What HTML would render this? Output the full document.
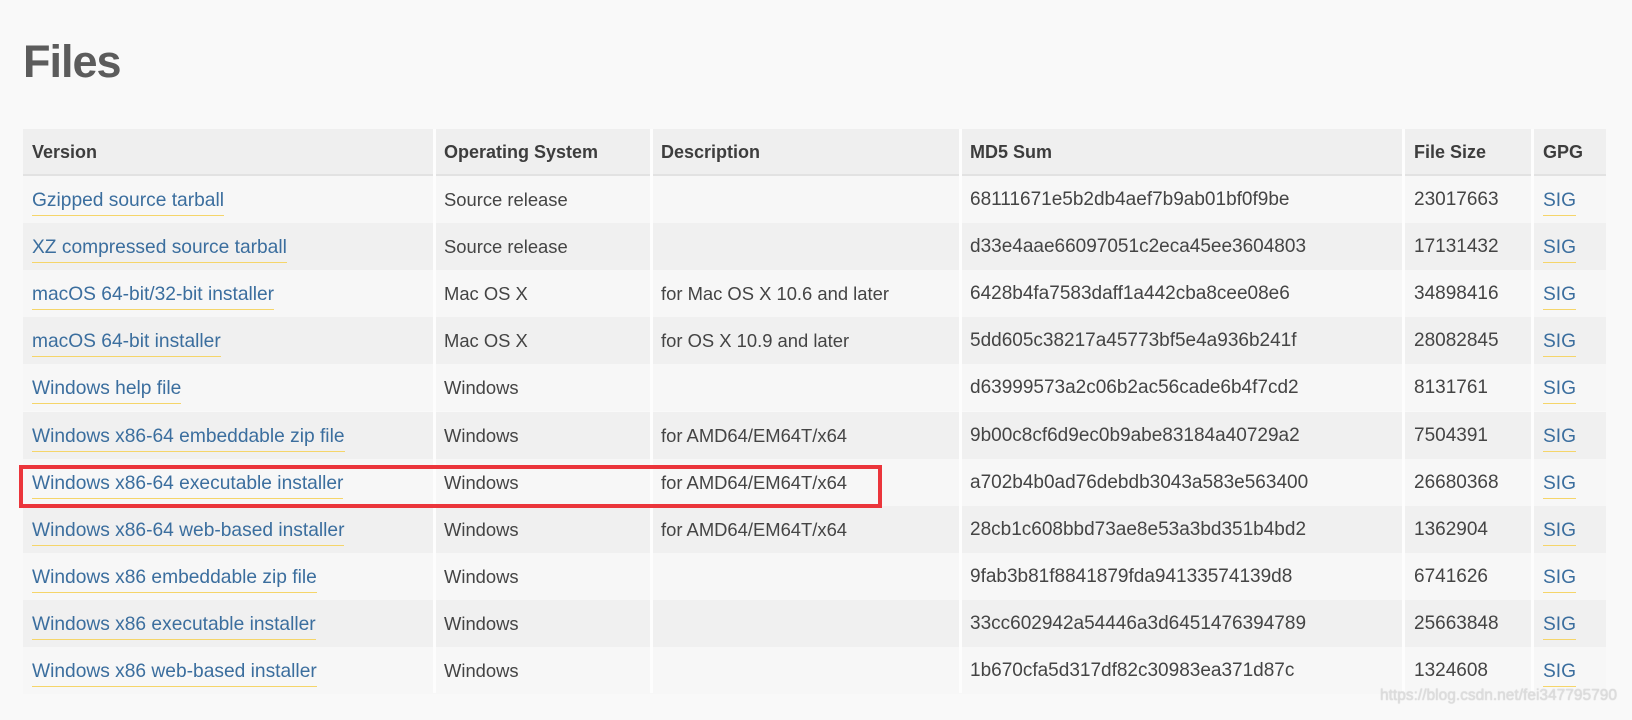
<!DOCTYPE html>
<html><head><meta charset="utf-8"><style>
*{margin:0;padding:0;box-sizing:border-box}
body{width:1632px;height:720px;background:#f9f9f9;font-family:"Liberation Sans",sans-serif;position:relative;overflow:hidden;color:#444}
h1{position:absolute;left:23px;top:36px;font-size:45px;font-weight:bold;color:#5c5c5c;letter-spacing:-1px}
.row{position:absolute;left:23px;width:1583px;height:47px}
.c{position:absolute;top:0;height:47px;line-height:48px;font-size:18.4px;white-space:nowrap;color:#444}
.sep{position:absolute;top:129px;height:564px;width:3px;background:#fdfdfd}
.h .c{font-weight:bold;color:#3d3d3d;font-size:18px;line-height:47px}
a{color:#3b6e9e;text-decoration:none;border-bottom:1px solid #f5d56a;padding-bottom:4px}
.v{font-size:19.2px;line-height:49px}
.m{font-size:19px}
.red{position:absolute;left:19px;top:465px;width:863px;height:43px;border:4px solid #eb353b}
.wm{position:absolute;left:1380px;top:687px;font-size:15.5px;color:#ddd;text-shadow:0 0 1px #bbb}
</style></head><body>
<h1>Files</h1>
<div class="row h" style="top:129px;background:#efefef;border-bottom:2px solid #e2e2e2">
<div class="c" style="left:9px">Version</div><div class="c" style="left:421px">Operating System</div><div class="c" style="left:638px">Description</div><div class="c" style="left:947px">MD5 Sum</div><div class="c" style="left:1391px">File Size</div><div class="c" style="left:1520px">GPG</div></div>
<div id="rows"></div>
<script>
var d=[["Gzipped source tarball","Source release","","68111671e5b2db4aef7b9ab01bf0f9be","23017663"],
["XZ compressed source tarball","Source release","","d33e4aae66097051c2eca45ee3604803","17131432"],
["macOS 64-bit/32-bit installer","Mac OS X","for Mac OS X 10.6 and later","6428b4fa7583daff1a442cba8cee08e6","34898416"],
["macOS 64-bit installer","Mac OS X","for OS X 10.9 and later","5dd605c38217a45773bf5e4a936b241f","28082845"],
["Windows help file","Windows","","d63999573a2c06b2ac56cade6b4f7cd2","8131761"],
["Windows x86-64 embeddable zip file","Windows","for AMD64/EM64T/x64","9b00c8cf6d9ec0b9abe83184a40729a2","7504391"],
["Windows x86-64 executable installer","Windows","for AMD64/EM64T/x64","a702b4b0ad76debdb3043a583e563400","26680368"],
["Windows x86-64 web-based installer","Windows","for AMD64/EM64T/x64","28cb1c608bbd73ae8e53a3bd351b4bd2","1362904"],
["Windows x86 embeddable zip file","Windows","","9fab3b81f8841879fda94133574139d8","6741626"],
["Windows x86 executable installer","Windows","","33cc602942a54446a3d6451476394789","25663848"],
["Windows x86 web-based installer","Windows","","1b670cfa5d317df82c30983ea371d87c","1324608"]];
var h="";
d.forEach(function(r,i){var t=176+i*47.1;
h+='<div class="row" style="top:'+t+'px;background:'+(i%2?'#f0f0f0':'#f7f7f7')+'"><div class="c v" style="left:9px"><a>'+r[0]+'</a></div><div class="c" style="left:421px">'+r[1]+'</div><div class="c" style="left:638px">'+r[2]+'</div><div class="c m" style="left:947px">'+r[3]+'</div><div class="c m" style="left:1391px">'+r[4]+'</div><div class="c v" style="left:1520px"><a>SIG</a></div></div>';});
[433,650,959,1402,1531].forEach(function(x){h+='<div class="sep" style="left:'+x+'px"></div>';});
document.getElementById("rows").innerHTML=h;
</script>
<div class="red"></div>
<div class="wm">https://blog.csdn.net/fei347795790</div>
</body></html>
